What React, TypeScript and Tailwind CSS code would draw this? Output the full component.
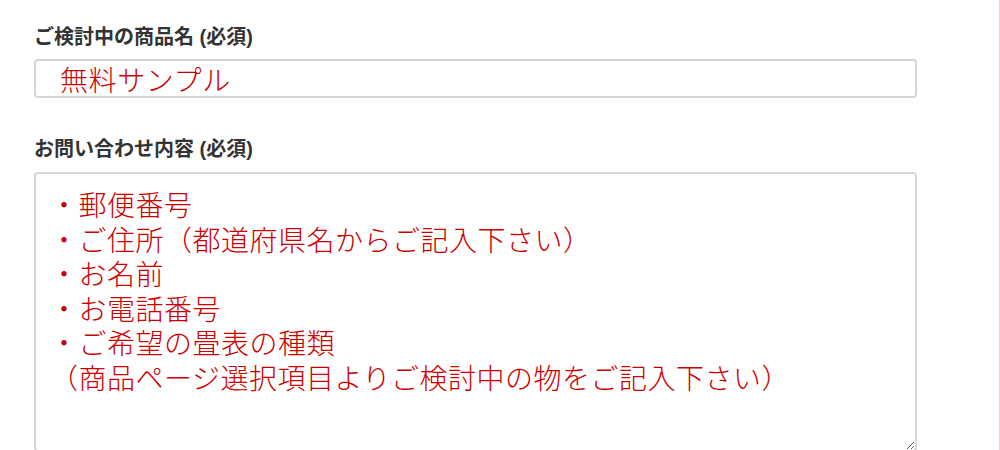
const CONTENT = [
  '・郵便番号',
  '・ご住所（都道府県名からご記入下さい）',
  '・お名前',
  '・お電話番号',
  '・ご希望の畳表の種類',
  '（商品ページ選択項目よりご検討中の物をご記入下さい）',
].join('\n');

const labelFont = { fontFamily: '"Liberation Sans", "Noto Sans CJK JP", sans-serif' };
const fieldFont = { fontFamily: '"Noto Sans CJK JP", "Noto Sans", sans-serif' };

function Label({ children }: { children: React.ReactNode }) {
  return (
    <label
      className="block h-[28px] text-[20px] leading-[28px] font-bold text-[#333333]"
      style={labelFont}
    >
      {children}
    </label>
  );
}

export default function App() {
  return (
    <div className="relative h-[450px] w-[1000px] overflow-hidden bg-white">
      <div className="absolute right-0 top-0 h-full w-px bg-[#f0d4d4]" />
      <div className="pl-[34px] pt-[23px] w-[917px]">
        <Label>ご検討中の商品名 (必須)</Label>
        <input
          readOnly
          value="無料サンプル"
          className="mt-[8px] block h-[39px] w-full rounded-[4px] border-2 border-[#d6d6d6] bg-white pl-[24px] text-[28px] tracking-[0.6px] font-light text-[#cc0000] outline-none"
          style={fieldFont}
        />

        <div className="mt-[37px]">
          <Label>お問い合わせ内容 (必須)</Label>
        </div>
        <textarea
          readOnly
          value={CONTENT}
          className="mt-[9px] block h-[280px] w-full rounded-[4px] border-2 border-[#d6d6d6] bg-white px-[14px] pt-[13px] text-[28px] tracking-[0.5px] leading-[34.5px] font-light text-[#cc0000] outline-none"
          style={fieldFont}
        />
      </div>
    </div>
  );
}
